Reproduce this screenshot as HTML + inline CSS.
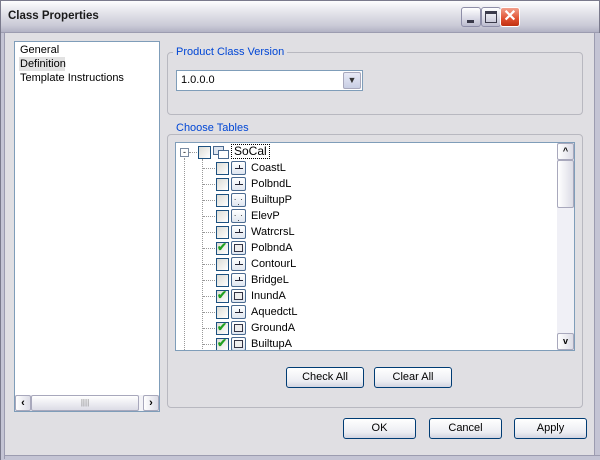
<!DOCTYPE html><html><head><style>
*{box-sizing:border-box}
body{margin:0;width:600px;height:460px;overflow:hidden;font-family:Tahoma,"Liberation Sans",sans-serif;font-size:11px;color:#000;background:#fff}
.win{position:absolute;left:0;top:0;width:600px;height:460px;background:#e0dfe3;border:1px solid #7a7a8c;}
.title{position:absolute;left:0;top:0;width:598px;height:32px;background:linear-gradient(#fdfdfe,#e8e8ee 30%,#c9c9d6 80%,#b2b2c4);border-bottom:1px solid #9c9cb0}
.title span{position:absolute;left:7px;top:9px;font-weight:bold;font-size:11.5px;color:#1a1a1a}
.tb{position:absolute;top:6px;width:20px;height:20px;border:1px solid #8e8ea8;border-radius:3px;background:linear-gradient(#fff,#d8d8e4 60%,#bcbcce)}
.frame{position:absolute;left:0;top:32px;width:4px;bottom:0;background:#c4c4d4;border-right:1px solid #9c9cb0}
.abs{position:absolute}
.box{position:absolute;background:#fff;border:1px solid #7f9db9}
.grp{position:absolute;border:1px solid #b8b8c0;border-radius:4px}
.lbl{position:absolute;background:#e0dfe3;color:#0046d5;padding:0 3px;font-size:11px}
.btn{position:absolute;height:21px;border:1px solid #003c74;border-radius:3px;background:linear-gradient(#fff,#ecedf2 70%,#d2d4e0);text-align:center;line-height:19px;font-size:11px}
.row{position:absolute;height:16px;line-height:16px;white-space:nowrap}
.cb{position:absolute;width:13px;height:13px;border:1px solid #1c5180;background:linear-gradient(135deg,#dcdcd6,#fff)}
.ic{position:absolute;width:15px;height:14px;border:1px solid #4a6a90;border-radius:2px;background:linear-gradient(#fff,#dfe6f0)}
.sb{position:absolute;background:#f3f3f7}
.sbb{position:absolute;border:1px solid #a8a8bc;border-radius:2px;background:linear-gradient(90deg,#fff,#dcdce6)}
</style></head><body><div class="win">
<div class="title"><span>Class Properties</span>
<div class="tb" style="left:460px"><div class="abs" style="left:5px;top:12px;width:7px;height:3px;background:#3a3a4a"></div></div>
<div class="tb" style="left:480px"><div class="abs" style="left:3px;top:3px;width:12px;height:12px;border:1px solid #3a3a4a;border-top-width:3px"></div></div>
<div class="tb" style="left:499px;background:linear-gradient(#f2a08c,#e05030 60%,#c03010);border-color:#fff;color:#fff;font-weight:bold;font-size:16px;text-align:center;line-height:17px">✕</div>
</div>
<div class="abs" style="left:593px;top:32px;width:6px;height:427px;background:#c4c4d4;border-left:1px solid #9c9cb0"></div>
<div class="abs" style="left:0;top:454px;width:599px;height:5px;background:#c4c4d4;border-top:1px solid #9c9cb0"></div>
<div class="frame"></div>

<div class="box" style="left:13px;top:40px;width:146px;height:371px">
<div class="abs" style="left:5px;top:2px">General</div>
<div class="abs" style="left:4px;top:15px;width:46px;height:14px;background:#e2e2e2"></div>
<div class="abs" style="left:5px;top:16px">Definition</div>
<div class="abs" style="left:5px;top:30px">Template Instructions</div>
<div class="sb" style="left:0;top:353px;width:144px;height:16px">
<div class="sbb" style="left:0;top:0;width:16px;height:16px;text-align:center;line-height:14px;font-weight:bold">‹</div>
<div class="sbb" style="left:16px;top:0;width:108px;height:16px;background:linear-gradient(#fff,#dcdce6);text-align:center;line-height:14px;color:#888;font-size:8px">||||</div>
<div class="sbb" style="left:128px;top:0;width:16px;height:16px;text-align:center;line-height:14px;font-weight:bold">›</div>
</div></div>

<div class="grp" style="left:166px;top:51px;width:416px;height:63px"></div>
<div class="lbl" style="left:172px;top:45px">Product Class Version</div>
<div class="box" style="left:175px;top:69px;width:187px;height:21px"><div class="abs" style="left:4px;top:3px">1.0.0.0</div>
<div class="sbb" style="left:166px;top:1px;width:18px;height:17px;background:linear-gradient(#e8eaf6,#c8cee4);text-align:center;line-height:15px;font-size:9px;font-weight:bold;color:#333">▼</div></div>

<div class="grp" style="left:166px;top:133px;width:416px;height:274px"></div>
<div class="lbl" style="left:172px;top:121px">Choose Tables</div>
<div class="box" style="left:174px;top:141px;width:400px;height:209px;overflow:hidden" id="t">
<div class="abs" style="left:8px;top:15px;height:192px;border-left:1px dotted #999"></div>
<div class="abs" style="left:4px;top:5px;width:9px;height:9px;border:1px solid #7a8aa0;background:#fff;font-size:9px;line-height:6px;text-align:center">-</div>
<div class="abs" style="left:13px;top:9px;width:8px;border-top:1px dotted #999"></div>
<div class="cb" style="left:22px;top:3px"></div>
<div class="abs" style="left:37px;top:3px;width:11px;height:9px;border:1px solid #4a6a90;background:#dfe6f0"></div>
<div class="abs" style="left:42px;top:7px;width:11px;height:9px;border:1px solid #4a6a90;background:#fff"></div>
<div class="abs" style="left:55px;top:1px;border:1px dotted #000;padding:0 2px;line-height:13px;font-size:12px">SoCal</div>
<div class="abs" style="left:26px;top:16px;height:192px;border-left:1px dotted #999"></div>
</div>
<div class="sb" style="left:556px;top:142px;width:17px;height:207px;background:#f0f0f6">
<div class="sbb" style="left:0;top:0;width:17px;height:17px;text-align:center;line-height:15px;font-size:9px;font-weight:bold">^</div>
<div class="sbb" style="left:0;top:17px;width:17px;height:48px"></div>
<div class="sbb" style="left:0;top:190px;width:17px;height:17px;text-align:center;line-height:15px;font-size:9px;font-weight:bold">v</div>
</div>

<div class="btn" style="left:285px;top:366px;width:78px">Check All</div>
<div class="btn" style="left:373px;top:366px;width:78px">Clear All</div>
<div class="btn" style="left:342px;top:417px;width:73px">OK</div>
<div class="btn" style="left:428px;top:417px;width:73px">Cancel</div>
<div class="btn" style="left:513px;top:417px;width:73px">Apply</div>
</div>
<script>
var n=[["CoastL",0,0],["PolbndL",0,0],["BuiltupP",0,1],["ElevP",0,1],["WatrcrsL",0,0],["PolbndA",1,2],["ContourL",0,0],["BridgeL",0,0],["InundA",1,2],["AquedctL",0,0],["GroundA",1,2],["BuiltupA",1,2]];
var t=document.getElementById('t'),h='';
n.forEach(function(r,i){var y=17+i*16;
h+='<div class="abs" style="left:27px;top:'+(y+8)+'px;width:12px;border-top:1px dotted #999"></div>';
h+='<div class="cb" style="left:40px;top:'+(y+2)+'px">'+(r[1]?'<span style="position:absolute;left:0;top:-3px;color:#21a121;font-weight:bold;font-size:12px">✔</span>':'')+'</div>';
var g=r[2]==0?'<div style="position:absolute;left:3px;top:6px;width:8px;border-top:1px solid #223"></div><div style="position:absolute;left:7px;top:3px;height:4px;border-left:1px solid #223"></div>':r[2]==1?'<div style="position:absolute;left:2px;top:1px;font-size:8px;line-height:5px;letter-spacing:1px">.&nbsp;.<br>&nbsp;.<br>.&nbsp;.</div>':'<div style="position:absolute;left:2px;top:2px;width:9px;height:8px;border:1px solid #334;background:#eee"></div>';
h+='<div class="ic" style="left:55px;top:'+(y+1)+'px">'+g+'</div>';
h+='<div class="row" style="left:75px;top:'+y+'px">'+r[0]+'</div>';});
t.insertAdjacentHTML('beforeend',h);
</script>
</body></html>
